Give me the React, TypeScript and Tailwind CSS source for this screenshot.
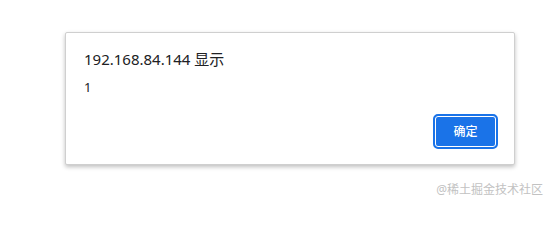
export default function App() {
  return (
    <div
      className="w-[551px] h-[203px] bg-white flex flex-col"
      style={{ fontFamily: '"Segoe UI", "Noto Sans", "Noto Sans CJK SC", sans-serif' }}
    >
      <div className="ml-[65px] mt-[32px] w-[450px] h-[133px] bg-white border border-[#cfcfcf] rounded-[2px] shadow-[0_2px_4px_rgba(0,0,0,0.25)] flex flex-col">
        <div className="pl-[18px] pt-[15px] text-[15px] leading-[22px] text-[#202124]">
          192.168.84.144 显示
        </div>
        <div className="pl-[18px] pt-[8px] text-[13px] leading-[18px] text-[#202124]">1</div>
        <div className="flex justify-end pr-[16px] mt-auto pb-[15px]">
          <button className="w-[65px] h-[35px] rounded-[5px] border-2 border-[#1a73e8] bg-[#1a73e8] shadow-[inset_0_0_0_1px_#fff] text-white text-[12px] font-medium leading-none flex items-center justify-center">
            确定
          </button>
        </div>
      </div>
      <div className="flex justify-end pr-[8px] mt-[18px] text-[12px] leading-[13px] text-[#c2c2c2]">
        @稀土掘金技术社区
      </div>
    </div>
  );
}
